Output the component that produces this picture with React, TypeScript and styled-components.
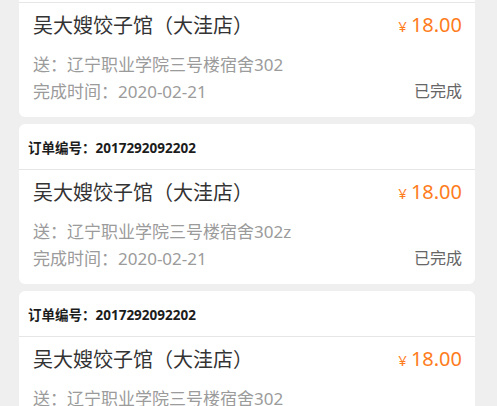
import React from 'react';
import styled, { createGlobalStyle } from 'styled-components';

const GlobalStyle = createGlobalStyle`
  html, body {
    margin: 0;
    padding: 0;
    background: #efefef;
    font-family: "Noto Sans", "Noto Sans CJK SC", sans-serif;
    overflow: hidden;
  }
`;

interface Order {
  id: string;
  shop: string;
  price: string;
  address: string;
  finishedAt: string;
  status: string;
}

const orders: Order[] = [
  {
    id: '2017292092202',
    shop: '吴大嫂饺子馆（大洼店）',
    price: '18.00',
    address: '辽宁职业学院三号楼宿舍302',
    finishedAt: '2020-02-21',
    status: '已完成',
  },
  {
    id: '2017292092202',
    shop: '吴大嫂饺子馆（大洼店）',
    price: '18.00',
    address: '辽宁职业学院三号楼宿舍302z',
    finishedAt: '2020-02-21',
    status: '已完成',
  },
  {
    id: '2017292092202',
    shop: '吴大嫂饺子馆（大洼店）',
    price: '18.00',
    address: '辽宁职业学院三号楼宿舍302',
    finishedAt: '2020-02-21',
    status: '已完成',
  },
];

// the list is scrolled: the first card's header sits above the viewport
const List = styled.div`
  display: flex;
  flex-direction: column;
  gap: 7px;
  margin-top: -43px;
  padding: 0 22px 0 19px;
`;

const Card = styled.div`
  background: #fff;
  border-radius: 6px;
  overflow: hidden;
`;

const CardHeader = styled.div`
  height: 45px;
  display: flex;
  align-items: center;
  padding: 0 9px;
  border-bottom: 1px solid #e6e6e6;
  font-size: 13.5px;
  font-weight: 700;
  color: #1c1c1c;
`;

const CardBody = styled.div`
  padding: 7px 13px 13.5px 14px;
`;

const Row = styled.div<{ $height: number; $mt?: number }>`
  display: flex;
  justify-content: space-between;
  align-items: center;
  height: ${(p) => p.$height}px;
  margin-top: ${(p) => p.$mt || 0}px;
`;

const Shop = styled.span`
  font-size: 20px;
  color: #333;
`;

const Price = styled.span`
  display: flex;
  align-items: baseline;
  gap: 4px;
  color: #ff7c1c;
  font-size: 20px;
`;

const Yen = styled.span`
  font-size: 15px;
`;

const Muted = styled.span`
  font-size: 17px;
  color: #9b9b9b;
`;

const Status = styled.span`
  font-size: 16px;
  color: #666;
`;

const OrderCard: React.FC<{ order: Order }> = ({ order }) => (
  <Card>
    <CardHeader>订单编号：{order.id}</CardHeader>
    <CardBody>
      <Row $height={28}>
        <Shop>{order.shop}</Shop>
        <Price>
          <Yen>¥</Yen>
          {order.price}
        </Price>
      </Row>
      <Row $height={27} $mt={11.5}>
        <Muted>送：{order.address}</Muted>
      </Row>
      <Row $height={27}>
        <Muted>完成时间：{order.finishedAt}</Muted>
        <Status>{order.status}</Status>
      </Row>
    </CardBody>
  </Card>
);

export default function App() {
  return (
    <>
      <GlobalStyle />
      <List>
        {orders.map((o, i) => (
          <OrderCard key={i} order={o} />
        ))}
      </List>
    </>
  );
}
